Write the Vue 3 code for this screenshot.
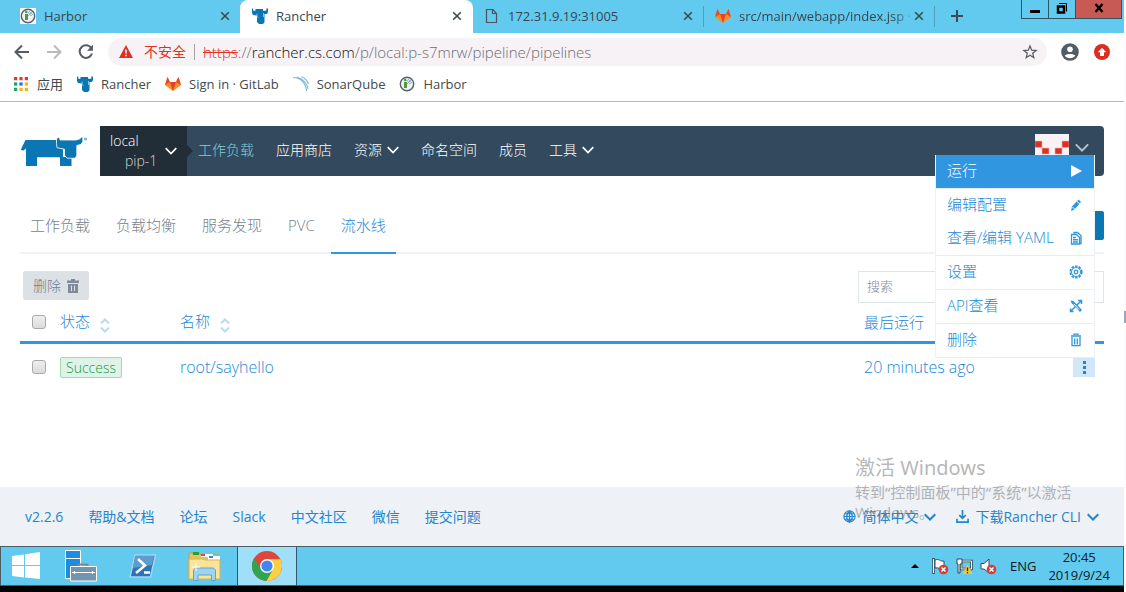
<script setup>
import { ref } from 'vue'

const navItems = [
  { label: '工作负载', active: true },
  { label: '应用商店' },
  { label: '资源', more: true },
  { label: '命名空间' },
  { label: '成员' },
  { label: '工具', more: true },
]
const subTabs = ['工作负载', '负载均衡', '服务发现', 'PVC', '流水线']
const currentTab = ref('流水线')
const footerLinks = ['v2.2.6', '帮助&文档', '论坛', 'Slack', '中文社区', '微信', '提交问题']
const allChecked = ref(false)
const rowChecked = ref(false)
const search = ref('')
const appDots = ['#e8372c', '#e8372c', '#e8372c', '#20a35a', '#1a73e8', '#fbb306', '#20a35a', '#fbb306', '#fbb306']
</script>

<template>
  <div class="screen">
    <header class="browser">
      <div class="tabstrip">
        <div class="tab first">
          <svg class="fav" viewBox="0 0 16 16"><rect width="16" height="16" fill="#fff" /><circle cx="8" cy="8" r="6.7" fill="#eef3f5" stroke="#596067" stroke-width="1.4" /><path d="M5 6h3v6H5z" fill="#4f9b36" /><circle cx="6.3" cy="4" r="1.3" fill="#4f9b36" /><path d="M8 4l3 4 3-3M9 3l4 4M8 8l4-4" stroke="#8fb7dc" fill="none" /></svg>
          <a href="#" class="title">Harbor</a>
          <button class="x" aria-label="×"><svg viewBox="0 0 10 10"><path d="M1.2 1.2l7.6 7.6M8.8 1.2L1.2 8.8" /></svg></button>
        </div>
        <div class="tab current">
          <svg class="fav" viewBox="0 0 16 16"><path fill="#0b76b4" d="M0 .5h1.200v2.200H3.500V1H11v1.700h3.300V.5H16v3.500l-1 2h-2.500v8.300L11 16H7l-2-2V7.500L1 7 0 5z" /><path d="M5 5.500v3l1.500 1M11.500 5v4" fill="none" stroke="#8bc4e2" /></svg>
          <a href="#" class="title">Rancher</a>
          <button class="x" aria-label="×"><svg viewBox="0 0 10 10"><path d="M1.2 1.2l7.6 7.6M8.8 1.2L1.2 8.8" /></svg></button>
        </div>
        <div class="tab">
          <svg class="fav" viewBox="0 0 16 16"><path d="M2.500 1.500h6.500l3.500 4v9h-10zM8.500 1.500v4h4" fill="none" stroke="#4a555b" stroke-width="1.200" /></svg>
          <a href="#" class="title">172.31.9.19:31005</a>
          <button class="x" aria-label="×"><svg viewBox="0 0 10 10"><path d="M1.2 1.2l7.6 7.6M8.8 1.2L1.2 8.8" /></svg></button>
        </div>
        <div class="tab split">
          <svg class="fav" viewBox="0 0 16 16"><path d="M8 15L0 9l2.500-8L5 6h6l2.500-5L16 9z" fill="#fc8a26" /><path d="M8 15L5 6h6z" fill="#e24329" /><path d="M0 9l2.500-8L5 6zM16 9l-2.500-8L11 6z" fill="#e24a2c" /></svg>
          <a href="#" class="title fade">src/main/webapp/index.jsp ·</a>
          <button class="x" aria-label="×"><svg viewBox="0 0 10 10"><path d="M1.2 1.2l7.6 7.6M8.8 1.2L1.2 8.8" /></svg></button>
        </div>
        <button class="plus" aria-label="+"><svg viewBox="0 0 12 12"><path d="M6 0v12M0 6h12" /></svg></button>
        <div class="win-controls">
          <button aria-label="–"><svg width="12" height="12" viewBox="0 0 12 12"><path d="M1 8h10v3H1z" /></svg></button>
          <button aria-label="❐"><svg width="12" height="12" viewBox="0 0 12 12"><path d="M2 4.500h6v6H2z" fill="none" stroke="#000" stroke-width="2.500" /><path d="M3 1.500h7.500v8" fill="none" stroke="#000" /></svg></button>
          <button class="close" aria-label="×"><svg width="10" height="10" viewBox="0 0 10 10"><path d="M1.500 1l7 8M8.500 1l-7 8" stroke="#000" stroke-width="2.400" /></svg></button>
        </div>
      </div>

      <div class="toolbar">
        <button class="tool" aria-label="←"><svg viewBox="0 0 16 16"><path d="M15 8H2M8 1.500L1.500 8 8 14.500" /></svg></button>
        <button class="tool off" aria-label="→"><svg viewBox="0 0 16 16"><path d="M1 8h13M8 1.500L14.500 8 8 14.500" /></svg></button>
        <button class="tool" aria-label="↻"><svg viewBox="0 0 16 16"><path d="M13.500 4.500A6.300 6.300 0 1 0 14 9.500" /><path d="M15 .8v6H9z" class="solid" /></svg></button>
        <div class="omnibox">
          <svg class="warn" viewBox="0 0 14 13"><path d="M7 0l7 13H0z" fill="#dc3224" /><path d="M7 4.500v4M7 9.700v1.600" stroke="#fff" stroke-width="1.500" /></svg>
          <span class="unsafe">不安全</span>
          <span class="bar"></span>
          <div class="url"><s>https</s>://<b>rancher.cs.com</b>/p/local:p-s7mrw/pipeline/pipelines</div>
          <button class="star" aria-label="☆"><svg viewBox="0 0 16 16"><path d="M8 2l1.700 4.200 4.400.3-3.400 2.800 1.100 4.400L8 11.300l-3.800 2.400 1.100-4.400L1.900 6.500l4.400-.3z" fill="none" stroke="#5a5f66" stroke-width="1.300" /></svg></button>
        </div>
        <button class="round" aria-label="●"><svg viewBox="0 0 18 18"><circle cx="9" cy="9" r="8.800" fill="#535b66" /><circle cx="9" cy="6.300" r="2.800" fill="#fff" /><path d="M3.700 12.800C5 10.300 13 10.300 14.300 12.800 12 16 6 16 3.700 12.800z" fill="#fff" /></svg></button>
        <button class="round" aria-label="⬆"><svg viewBox="0 0 18 18"><circle cx="9" cy="9" r="8" fill="#dc2d20" /><path d="M9 4.800l4.200 4.500h-2.200V13H7V9.300H4.800z" fill="#fff" /></svg></button>
      </div>

      <nav class="bookmarks">
        <a href="#" class="all"><svg class="apps" viewBox="0 0 13 13"><rect v-for="(c, i) in appDots" :key="i" :x="(i % 3) * 5" :y="Math.floor(i / 3) * 5" width="3" height="3" :fill="c" /></svg>应用</a>
        <a href="#"><svg viewBox="0 0 16 16"><path fill="#0b76b4" d="M0 .5h1.200v2.200H3.500V1H11v1.700h3.300V.5H16v3.500l-1 2h-2.500v8.300L11 16H7l-2-2V7.500L1 7 0 5z" /><path d="M5 5.500v3l1.500 1M11.500 5v4" fill="none" stroke="#8bc4e2" /></svg>Rancher</a>
        <a href="#"><svg viewBox="0 0 16 16"><path d="M8 15L0 9l2.500-8L5 6h6l2.500-5L16 9z" fill="#fc8a26" /><path d="M8 15L5 6h6z" fill="#e24329" /><path d="M0 9l2.500-8L5 6zM16 9l-2.500-8L11 6z" fill="#e24a2c" /></svg>Sign in · GitLab</a>
        <a href="#"><svg viewBox="0 0 16 16"><path d="M0 1.500c8 0 13 6 13.500 13.500M4 1c6 2 10 6.500 11 12M8.500.5C12 2.500 14.500 5 15.500 8" fill="none" stroke="#7db9e0" stroke-width="1.100" /></svg>SonarQube</a>
        <a href="#"><svg viewBox="0 0 16 16"><circle cx="8" cy="8" r="6.700" fill="#eef3f5" stroke="#596067" stroke-width="1.400" /><path d="M5 6h3v6H5z" fill="#4f9b36" /><circle cx="6.300" cy="4" r="1.300" fill="#4f9b36" /><path d="M8 4l3 4 3-3M9 3l4 4M8 8l4-4" stroke="#8fb7dc" fill="none" /></svg>Harbor</a>
      </nav>
    </header>

    <main class="page">
      <div class="topbar">
        <a href="#" class="logo" aria-label="Rancher"><svg viewBox="0 0 67 30"><path fill="#0b76b4" d="M5.500 3H37v6.500l6 2.500v8.200H17V29H6V11.500L3.500 13.500.8 13l1.700-4z" /><path fill="#0b76b4" d="M40 20h11.500v9H40z" /><path fill="#0b76b4" stroke="#fff" stroke-width=".8" d="M36.500 1.500L39.500 0l.5 3h16l4-1.200L61.500 0h1.300v5l-2 2.500-4 1v10.500l-2.300 2.200H47l-2.500-3v-6l-7.500-1.500-.5-4z" /><path d="M64 .8h3v2.500h-3z" fill="#7fb8d8" /></svg></a>
        <nav class="nav">
          <button class="cluster">
            <span class="names"><span>local</span><span class="project">pip-1</span></span>
            <svg class="chev" viewBox="0 0 12 8"><path d="M.7 1.200L6 6.500l5.300-5.300" /></svg>
          </button>
          <a v-for="item in navItems" :key="item.label" href="#" :class="{ active: item.active }">{{ item.label }}<svg v-if="item.more" class="chev" viewBox="0 0 12 8"><path d="M.7 1.200L6 6.500l5.300-5.300" /></svg></a>
          <button class="user" aria-label="⌄">
            <svg class="avatar" viewBox="0 0 34 34"><rect width="34" height="34" fill="#f8f2f5" /><path fill="#dc3022" stroke="#eeb4b0" stroke-width=".6" d="M0 7h7v6.500H0zM27 7h7v6.500h-7zM7 14h7v6H7zM20 14h7v6h-7z" /></svg>
            <svg class="chev dim" viewBox="0 0 12 8"><path d="M.7 1.200L6 6.500l5.300-5.300" /></svg>
          </button>
        </nav>
      </div>

      <div class="subtabs">
        <button v-for="t in subTabs" :key="t" :class="{ active: t === currentTab }" @click="currentTab = t">{{ t }}</button>
        <span class="primary"></span>
      </div>

      <div class="actions">
        <button class="delete" disabled>删除
          <svg viewBox="0 0 12 14"><path d="M4 0h4v1.500h4V4H0V1.500h4zM1 5h10v9H1z" fill="#7f8b96" /><path d="M4.500 6.500v5.500M7.500 6.500v5.500" stroke="#dce1e5" /></svg>
        </button>
        <input v-model="search" class="search" type="text" placeholder="搜索" aria-label="搜索">
      </div>

      <table class="grid">
        <thead>
          <tr>
            <th class="c-check"><input v-model="allChecked" type="checkbox" aria-label="状态"></th>
            <th class="c-state">状态<svg class="sort" viewBox="0 0 10 15"><path d="M1 5.500L5 1.500l4 4M1 9.500l4 4 4-4" /></svg></th>
            <th>名称<svg class="sort" viewBox="0 0 10 15"><path d="M1 5.500L5 1.500l4 4M1 9.500l4 4 4-4" /></svg></th>
            <th class="c-last">最后运行</th>
          </tr>
        </thead>
        <tbody>
          <tr>
            <td><input v-model="rowChecked" type="checkbox" aria-label="root/sayhello"></td>
            <td><span class="badge">Success</span></td>
            <td><a href="#">root/sayhello</a></td>
            <td>
              <div class="last"><a href="#">20 minutes ago</a>
                <button class="dots" aria-label="⋮"><svg viewBox="0 0 3 13"><path d="M0 0h3v3H0zM0 5h3v3H0zM0 10h3v3H0z" /></svg></button>
              </div>
            </td>
          </tr>
        </tbody>
      </table>

      <ul class="menu">
        <li class="on sep"><button>运行<svg viewBox="0 0 14 14"><path d="M2 1l11 6-11 6z" fill="#fff" /></svg></button></li>
        <li><button>编辑配置<svg viewBox="0 0 14 14"><path d="M2 13l1-4.500 6.500-7 2.500 2.500-6.500 7.500z" fill="#3096e0" /><path d="M3.500 9l2.500 2.500M8 3.500l3 2.500" stroke="#fff" fill="none" /></svg></button></li>
        <li class="sep"><button>查看/编辑 YAML<svg viewBox="0 0 14 14"><path d="M5 2.500V1.500h3.500l3.500 3v8H10M2.500 3.500h5l3 3v6.500h-8z" fill="none" stroke="#3096e0" stroke-width="1.300" /><path d="M4 6.500h3M4 8.700h5M4 11h5" stroke="#3096e0" stroke-width="1.400" /></svg></button></li>
        <li class="sep"><button>设置<svg viewBox="0 0 14 14"><circle cx="7" cy="7" r="5.700" fill="none" stroke="#3096e0" stroke-width="1.800" stroke-dasharray="2.500 1.100" /><circle cx="7" cy="7" r="4.500" fill="none" stroke="#3096e0" /><circle cx="7" cy="7" r="1.800" fill="none" stroke="#3096e0" stroke-width="1.300" /></svg></button></li>
        <li class="sep"><button>API查看<svg viewBox="0 0 14 14"><path d="M2 12L12 2M9 1.500h3.500V5M1.500 9.500V12.500h3" fill="none" stroke="#3096e0" stroke-width="1.500" /><path d="M1.500 1.500l3 .5 8.500 9-2 2-8.500-9z" fill="#3096e0" /><path d="M5 5l5 5.500" stroke="#fff" /></svg></button></li>
        <li class="sep"><button>删除<svg viewBox="0 0 14 14"><path d="M5 2V1.200h4V2M2 3h10M3 4v8.700h8V4M5.700 5.500v6M8.300 5.500v6" fill="none" stroke="#3096e0" stroke-width="1.300" /></svg></button></li>
      </ul>
    </main>

    <footer class="footer">
      <a v-for="l in footerLinks" :key="l" href="#">{{ l }}</a>
      <button class="lang">
        <svg class="ico" viewBox="0 0 14 14"><circle cx="7" cy="7" r="6" /><path d="M7 1v12M1 7h12M2 4h10M2 10h10M7 1C3 4 3 10 7 13M7 1c4 3 4 9 0 12" /></svg>
        简体中文
        <svg class="chev" viewBox="0 0 12 8"><path d="M.7 1.200L6 6.500l5.300-5.300" /></svg>
      </button>
      <button class="cli">
        <svg class="ico" viewBox="0 0 14 14"><path d="M7 0v9M3.500 5.500L7 9l3.500-3.500M1 9.500V13h12V9.500" stroke-width="1.800" /></svg>
        下载Rancher CLI
        <svg class="chev" viewBox="0 0 12 8"><path d="M.7 1.200L6 6.500l5.300-5.300" /></svg>
      </button>
    </footer>

    <div class="taskbar">
      <button class="task start" aria-label="Windows"><svg width="28" height="28" viewBox="0 0 28 28"><path fill="#fff" d="M0 4l12-1.500V13H0zM13 2.300L28 0v13H13zM0 14h12v11.500L0 24zM13 14h15v13L13 25.500z" /></svg></button>
      <button class="task" aria-label="▤"><svg width="34" height="34" viewBox="0 0 34 34"><path d="M1.500 1.500h15v28h-15z" fill="#1c8be0" stroke="#fff" /><path d="M1.500 9.500h15" stroke="#fff" /><path d="M14.500 18v-2.500h9V18" fill="none" stroke="#6e8da6" stroke-width="2" /><path d="M6.500 17.500h26v14.500h-26z" fill="#7295ad" stroke="#fff" /><path d="M8 23.500h23M10.500 22v3M28.500 22v3" stroke="#fff" /></svg></button>
      <button class="task" aria-label="&gt;_"><svg width="28" height="24" viewBox="0 0 28 24"><path d="M6 1h20.500l-5 22H1z" fill="#2c74b4" stroke="#a7d4ee" stroke-width="1.500" /><path d="M6 2h19l-2 9L4 14z" fill="#5c9ccf" /><path d="M9 5l7 6.500L7 19M15 18.500h6" fill="none" stroke="#fff" stroke-width="2.500" /></svg></button>
      <button class="task" aria-label="▣"><svg width="34" height="32" viewBox="0 0 34 32"><path d="M1 3h10l2 2h18v23H1z" fill="#e5c45f" stroke="#c59c3a" /><path d="M5 2h6v3H5z" fill="#2ca02c" /><path d="M13 4h12v3H13z" fill="#fff" /><path d="M13 4h4v2h-4z" fill="#e74c2c" /><path d="M20 6h12v4H20z" fill="#fff" /><path d="M21 6h4v2h-4z" fill="#2a8be0" /><path d="M1 9h14l2 1h15v19H1z" fill="#f8e49a" stroke="#d7b450" /><path d="M5.500 30.500V20l2-2h18l2 2v10.500h-4V25H10v5.500z" fill="#9fd4ef" stroke="#5aa6cf" /><path d="M8 13v8M4 17h8" stroke="#fff" /></svg></button>
      <button class="task chrome" aria-label="Chrome"><svg width="30" height="30" viewBox="0 0 30 30"><circle cx="15" cy="15" r="15" fill="#e0443a" /><path d="M15 8.300H28.400A15 15 0 0 1 14.400 30L20.800 18.300z" fill="#fbd042" /><path d="M2 7.500L9.200 18.300 15 21.700l5.200-2L14.400 30A15 15 0 0 1 2 7.500z" fill="#2ea550" /><circle cx="15" cy="15" r="7" fill="#fff" /><circle cx="15" cy="15" r="5.600" fill="#4285f4" /></svg></button>
      <div class="tray">
        <svg width="8" height="4" viewBox="0 0 8 4"><path d="M0 4l4-4 4 4z" /></svg>
        <svg width="17" height="17" viewBox="0 0 17 17"><path d="M1.500 0v16" stroke="#3a4a52" stroke-width="2.500" /><path d="M1.500 1v14" stroke="#fff" /><path d="M3 2c4-2 5 2 9 1v8c-4 1-5-2-9-1z" fill="#fff" stroke="#3a4a52" /><circle cx="11.500" cy="11.500" r="4.800" fill="#dc3b34" /><path d="M9.500 9.500l4 4M13.500 9.500l-4 4" stroke="#fff" stroke-width="1.500" /></svg>
        <svg width="17" height="17" viewBox="0 0 17 17"><path d="M5 3h10.500v8H5z" fill="#62caef" stroke="#34434b" stroke-width="2.500" /><path d="M5 3h10.500v8H5z" fill="none" stroke="#fff" /><path d="M1 1h5v5H4v9H2V6H1z" fill="#fff" stroke="#34434b" /><path d="M11.500 6.500l5 9.500h-10z" fill="#fcc32c" /><path d="M11.500 9.500v3.500M11.500 14v1.200" stroke="#222" stroke-width="1.300" /></svg>
        <svg width="17" height="17" viewBox="0 0 17 17"><path d="M1 5.500h3L9 1v14L4 11H1z" fill="#fff" stroke="#3a4a52" /><circle cx="11.500" cy="11.500" r="4.800" fill="#dc3b34" /><path d="M9.500 9.500l4 4M13.500 9.500l-4 4" stroke="#fff" stroke-width="1.500" /></svg>
        <span class="ime">ENG</span>
        <time>20:45<br>2019/9/24</time>
      </div>
    </div>

    <div class="watermark">
      <p class="big">激活 Windows</p>
      <p>转到“控制面板”中的“系统”以激活 Windows。</p>
    </div>
    <span class="edge"></span>
  </div>
</template>

<style>
body { margin: 0; background: #fcfbfd; }
</style>

<style scoped>
.screen {
  position: relative;
  box-sizing: border-box;
  min-height: 100vh;
  margin-right: 2px;
  display: flex;
  flex-direction: column;
  background: #fff;
  border-bottom: 6px solid #000;
  font-family: "Open Sans", "Noto Sans CJK SC", sans-serif;
  font-weight: 300;
  font-size: 14px;
  line-height: 20px;
  color: #2389d6;
}
button, input { font: inherit; color: inherit; margin: 0; padding: 0; border: 0; background: none; border-radius: 0; }
button { display: flex; align-items: center; justify-content: center; white-space: nowrap; }
a { color: inherit; text-decoration: none; white-space: nowrap; }
svg { flex: none; display: block; }

.browser { border-bottom: 1px solid #b6b6b8; }
.tabstrip { display: flex; height: 33px; background: #62caef; color: #3a464c; font-size: 13px; font-weight: 400; }
.tab { display: flex; align-items: center; box-sizing: border-box; width: 231px; padding: 0 11px 1px 11px; position: relative; }
.tab.first { width: 240px; padding-left: 20px; padding-right: 10px; border-bottom-right-radius: 8px; }
.tab.current { width: 233px; background: #fff; border-radius: 8px 8px 0 0; padding-left: 12px; }
.tab.split { width: 232px; border-left: 1px solid #4f9fbd; border-right: 1px solid #4f9fbd; height: 21px; margin-top: 6px; margin-left: -1px; padding-right: 10px; padding-bottom: 2px; }
.fav { width: 16px; height: 16px; margin-right: 8px; }
.title { flex: 1; overflow: hidden; }
.fade { mask-image: linear-gradient(90deg, #000 88%, transparent); }
.x { width: 10px; height: 10px; }
.x svg { width: 10px; stroke: #3f4b52; stroke-width: 1.6; }
.plus { width: 44px; padding-bottom: 2px; }
.plus svg { width: 12px; stroke: #3f4b52; stroke-width: 2; }
.win-controls { display: flex; margin-left: auto; height: 19px; margin-right: 2px; border: 1px solid #2d5563; border-top: 0; box-sizing: border-box; }
.win-controls button { width: 27px; padding-bottom: 2px; border-right: 1px solid #2d5563; }
.win-controls .close { width: 45px; border: 0; background: #c75a55; }

.toolbar { display: flex; align-items: center; height: 37px; padding: 0 13px 0 14px; }
.tool { width: 16px; margin-right: 16px; }
.tool svg { width: 16px; fill: none; stroke: #555b63; stroke-width: 2; }
.tool svg .solid { fill: #555b63; stroke: none; }
.tool.off svg { stroke: #b8babd; }
.omnibox { flex: 1; display: flex; align-items: center; height: 28px; border-radius: 14px; background: #f7f2f6; margin-left: -2px; padding: 0 9px 0 11px; color: #6d6d74; }
.warn { width: 14px; margin-right: 11px; }
.unsafe { color: #dc3224; font-weight: 400; }
.bar { width: 1px; height: 16px; background: #a5a3a8; margin: 0 8px; }
.url { flex: 1; white-space: nowrap; font-size: 15px; }
.url s { color: #dc3224; }
.url b { font-weight: 300; color: #111; }
.star svg { width: 16px; }
.round { margin-left: 14px; width: 18px; }
.round svg { width: 18px; }

.bookmarks { display: flex; align-items: center; gap: 14px; height: 28px; padding: 0 0 3px 14px; font-size: 13px; color: #43494f; font-weight: 400; }
.bookmarks a { display: flex; align-items: center; gap: 8px; }
.bookmarks .all { gap: 9px; }
.bookmarks svg { width: 16px; }
.bookmarks .apps { width: 14px; }

.page { position: relative; flex: 1; padding: 24px 20px 0; }
.topbar { display: flex; height: 50px; }
.logo { width: 80px; padding-top: 11px; box-sizing: border-box; }
.logo svg { width: 67px; overflow: visible; }
.nav { flex: 1; display: flex; align-items: center; gap: 22px; background: #33495d; color: #fff; border-radius: 0 4px 4px 0; }
.nav a { display: flex; align-items: center; padding-bottom: 2px; }
.nav a .chev { margin-left: 5px; }
.nav .active { color: #7fd3d8; }
.chev { width: 12px; fill: none; stroke: currentColor; stroke-width: 1.7; }
.cluster { position: relative; box-sizing: border-box; width: 87px; height: 50px; padding: 0 10px; margin-right: -11px; justify-content: space-between; align-items: center; background: #222e37; color: #fff; }
.cluster::after { content: ""; position: absolute; left: 100%; top: 19px; border: 6px solid transparent; border-left-color: #222e37; border-right: 0; }
.names { display: flex; flex-direction: column; text-align: left; }
.project { padding-left: 15px; color: #d3d7d9; }
.user { margin-left: auto; padding-right: 15px; gap: 6px; align-self: flex-start; padding-top: 8px; }
.user svg.avatar { width: 34px; }
.dim { width: 14px; color: #bac3cb; margin-bottom: 6px; }

.subtabs { display: flex; gap: 6px; margin-top: 22px; height: 54px; border-bottom: 2px solid #eef1f6; color: #77818a; font-size: 15px; }
.subtabs button { padding: 0 10px; margin-bottom: -2px; border-bottom: 2px solid transparent; }
.subtabs .active { color: #2389d6; border-color: #3096e0; }
.primary { margin: 13px 0 0 auto; width: 90px; height: 29px; background: #0b76b4; border-radius: 2px; }

.actions { display: flex; justify-content: space-between; align-items: flex-start; margin-top: 17px; }
.delete { height: 29px; margin-left: 3px; padding: 0 10px; gap: 6px; border-radius: 2px; background: #dce1e5; color: #74808a; }
.delete svg { width: 12px; }
.search { box-sizing: border-box; width: 246px; height: 32px; padding: 0 8px 2px; border: 1px solid #dde5e6; font-size: 13px; background: #fff; }
.search::placeholder { color: #848b93; opacity: 1; }

.grid { width: 100%; border-collapse: separate; border-spacing: 0; table-layout: fixed; font-size: 16px; }
.grid th, .grid td { padding: 0; text-align: left; font-weight: 300; vertical-align: middle; white-space: nowrap; }
.grid th { height: 38px; border-bottom: 3px solid #3096e0; font-size: 15px; }
.grid td { height: 46px; }
.grid .c-check { width: 40px; }
.c-state { width: 120px; }
.c-last { width: 240px; }
.grid input { appearance: none; display: block; box-sizing: border-box; width: 14px; height: 14px; margin-left: 12px; border: 1px solid #a9a9ab; border-radius: 3px; background: linear-gradient(#efefef, #dbdbdb); }
.sort { display: inline-block; width: 10px; margin-left: 10px; vertical-align: -6px; fill: none; stroke: #b9dcf6; stroke-width: 2; }
.badge { display: inline-block; border: 1px solid #9fdab8; border-radius: 2px; background: #dff3e8; color: #16994c; font-size: 14px; line-height: 19px; padding: 0 5px; }
.last { display: flex; align-items: center; justify-content: space-between; padding-right: 9px; }
.dots { width: 22px; height: 19px; background: #cfe7f7; }
.dots svg { width: 3px; fill: #2386cf; }

.menu { position: absolute; top: 53px; right: 29px; box-sizing: border-box; width: 160px; margin: 0; padding: 0; list-style: none; background: #fff; border: 1px solid #eef1f6; border-width: 0 1px; font-size: 15px; }
.menu button { width: 100%; height: 33px; padding: 0 11px 3px; justify-content: space-between; }
.menu svg { width: 14px; margin-top: 2px; }
.menu .sep { border-bottom: 1px solid #e9edf3; }
.menu .on { color: #fff; }
.menu .on button { background: #3096e0; }

.footer { display: flex; align-items: center; gap: 25px; height: 59px; padding: 0 25px; background: #eef1f6; color: #2386cb; font-weight: 400; }
.footer button { gap: 6px; }
.footer .lang { margin-left: auto; margin-right: -5px; }
.footer .ico { width: 13px; fill: none; stroke: #2386cb; stroke-width: 1.2; }
.footer .chev { stroke-width: 2; }

.taskbar { display: flex; height: 38px; border: 1px solid #4c5c64; background: #62caef; color: #10191d; font-weight: 400; }
.task { width: 62px; }
.task.start { width: 49px; }
.task.chrome { width: 60px; margin-left: 1px; background: #9fdff7; border: 1px solid #2e5666; border-width: 0 1px; }
.tray { display: flex; align-items: center; gap: 7px; margin-left: auto; padding-right: 13px; font-size: 13px; line-height: 18px; }
.tray svg:first-child { margin-right: 6px; }
.ime { margin: 0 5px 0 6px; }
.tray time { text-align: center; }

.watermark { position: absolute; right: 23px; bottom: 64px; width: 246px; color: rgba(120, 120, 124, .55); font-family: "Noto Sans", "Noto Sans CJK SC", sans-serif; font-weight: 400; font-size: 15px; line-height: 20px; pointer-events: none; }
.watermark p { margin: 0; }
.watermark .big { font-size: 20px; line-height: 28px; }
.edge { position: absolute; left: 100%; top: 311px; width: 2px; height: 12px; background: #9ba7bf; }
</style>
